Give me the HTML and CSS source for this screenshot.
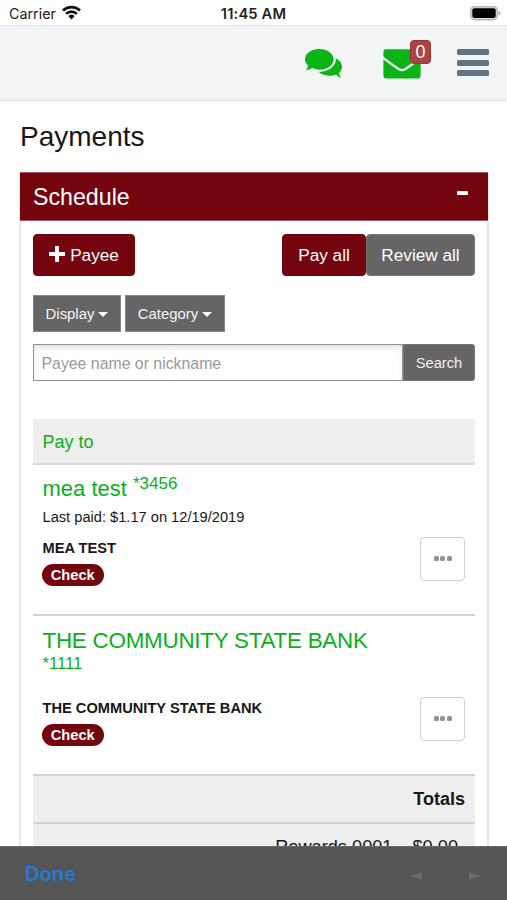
FILE: index.html
```html
<!DOCTYPE html>
<html lang="en">
<head>
<meta charset="utf-8">
<title>Payments</title>
<link rel="stylesheet" href="styles.css">
</head>
<body>
<div class="status">
  <div class="carrier"><span>Carrier</span>
    <svg class="wifi" viewBox="0 0 18 14" width="19" height="15"><g fill="none" stroke="#111" stroke-width="2.6"><path d="M.9 5.1a11.6 11.6 0 0 1 16.2 0"/><path d="M3.9 8.3a7.3 7.3 0 0 1 10.2 0"/></g><path fill="#111" d="M5.9 10.4a4.5 4.5 0 0 1 6.2 0L9 13.6z"/></svg>
  </div>
  <div class="time">11:45 AM</div>
  <svg class="battery" viewBox="0 0 31 15" width="31" height="15"><rect x=".7" y=".7" width="26.6" height="13" rx="3.8" fill="#ddd" stroke="#b8b8b8" stroke-width="1.4"/><rect x="2.3" y="2.3" width="23.4" height="9.8" rx="2" fill="#000"/><path d="M28.5 4.8q2 .6 2 2.4t-2 2.4z" fill="#aaa"/></svg>
</div>
<header class="topbar">
  <svg class="chat" viewBox="0 32 576 448" width="37" height="29"><path fill="#09b414" d="M445 192c0-88.400-99.700-160-222.500-160S0 103.600 0 192c0 34.300 18 68 50 96-4 24-16 43-26 56-5 6-2 14 5 13 34-4 64-18 84-34 33 18 68 29 109.500 29C345.300 352 445 280.400 445 192z"/><path fill="#09b414" d="M530 404c30-28 46-61 46-96 0-56-34-104-94-130 4 110-96 192-230 206-12 1-26 2-40 2 40 38 98 60 160 60 42 0 80-7 112-20 20 18 36 38 62 48 8 3 13-6 9-12-12-16-23-32-25-58z"/></svg>
  <div class="mail">
    <svg viewBox="0 0 38 30" width="38" height="30"><rect x=".4" y=".3" width="37.200" height="29.200" rx="3" fill="#09b414"/><path d="M-1 8C5 12.500 10 16.300 16 20.300Q19 22 22 20.300C28 16.300 33 12.500 39 8" fill="none" stroke="#f2f4f6" stroke-width="2.300"/></svg>
    <span class="count">0</span>
  </div>
  <div class="menu"><i></i><i></i><i></i></div>
</header>
<main>
  <h1>Payments</h1>
  <section class="panel">
    <div class="panel-head"><h2>Schedule</h2><span class="minus"></span></div>
    <div class="panel-body">
      <div class="actions">
        <button class="btn red payee"><svg viewBox="0 0 16 16" width="16" height="16"><path d="M6 0h4v6h6v4h-6v6H6v-6H0V6h6z" fill="#fff"/></svg><span>Payee</span></button>
        <div class="group"><button class="btn red payall">Pay all</button><button class="btn gray review">Review all</button></div>
      </div>
      <div class="filters">
        <button class="filter display">Display<i class="caret"></i></button><button class="filter category">Category<i class="caret"></i></button>
      </div>
      <div class="search"><input type="text" placeholder="Payee name or nickname"><button>Search</button></div>
      <div class="table">
        <div class="thead">Pay to</div>
        <div class="row first">
          <div class="name">mea test <sup>*3456</sup></div>
          <div class="last">Last paid: $1.17 on 12/19/2019</div>
          <div class="detail"><div><div class="full">MEA TEST</div><span class="pill">Check</span></div><button class="more"><i></i><i></i><i></i></button></div>
        </div>
        <div class="row second">
          <div class="name bank">THE COMMUNITY STATE BANK</div>
          <div class="acct">*1111</div>
          <div class="detail"><div><div class="full">THE COMMUNITY STATE BANK</div><span class="pill">Check</span></div><button class="more"><i></i><i></i><i></i></button></div>
        </div>
        <div class="totals">Totals</div>
        <div class="sum"><span>Rewards 0001</span><span>$0.00</span></div>
      </div>
    </div>
  </section>
</main>
<footer class="toolbar">
  <span class="done">Done</span>
  <div class="arrows"><svg viewBox="0 0 12 8" width="12" height="8"><path d="M0 4 12 .5v7z" fill="#6c6c6c"/></svg><svg viewBox="0 0 12 8" width="12" height="8"><path d="M12 4 0 .5v7z" fill="#6c6c6c"/></svg></div>
</footer>
</body>
</html>
```
FILE: styles.css
```css
* { box-sizing: border-box; }
html, body { height: 900px; overflow: hidden; }
body { margin: 0; background: #fff; color: #171717; font-family: "Liberation Sans", Arial, sans-serif; display: flex; flex-direction: column; }
button { font-family: inherit; margin: 0; padding: 0; border: 0; }
h1, h2 { margin: 0; font-weight: 400; }
svg { display: block; }

.status { flex: none; height: 25px; display: grid; grid-template-columns: 1fr auto 1fr; align-items: center; padding: 2px 9px 0 9px; font-family: Inter, sans-serif; color: #222; }
.carrier { display: flex; align-items: center; gap: 6px; font-size: 14.3px; }
.wifi { margin-top: -2px; }
.time { font-weight: 600; font-size: 14.7px; letter-spacing: .15px; }
.battery { justify-self: end; margin-right: -3px; }

.topbar { flex: none; height: 76px; background: #f2f4f6; border-top: 1px solid #e4e4e5; border-bottom: 1px solid #dfe1e4; display: flex; align-items: flex-start; padding: 23px 18.500px 0 305px; }
.mail { position: relative; margin-left: 41px; }
.count { position: absolute; left: 27px; top: -9px; width: 21px; height: 24px; border-radius: 4px; border: 1px solid #993537; background: #ad4143; color: #fff; font-size: 18px; line-height: 23px; text-align: center; }
.menu { margin: 0 0 0 auto; width: 32px; display: flex; flex-direction: column; gap: 4.500px; }
.menu i { height: 6px; border-radius: 1.500px; background: #617283; }

main { flex: none; height: 745px; overflow: hidden; padding: 18px 18px 0 19px; }
h1 { font-size: 28px; line-height: 36px; padding-left: 1px; }
.panel { margin-top: 17px; border: solid #e7e7e7; border-width: 0 2px; height: 700px; }
.panel-head { height: 49px; margin: 0 -1px; padding: 0 20px 0 13px; background: #74050f; border: 1px solid #a15860; border-width: 1px 0; color: #fff; display: flex; justify-content: space-between; }
h2 { font-size: 23.200px; line-height: 48px; }
.minus { width: 11px; height: 4px; margin-top: 18px; background: #fff; border-radius: 1px; }
.panel-body { padding: 13px 12px 0; }
.actions { display: flex; justify-content: space-between; }
.btn { height: 42px; border-radius: 4px; color: #fff; font-size: 17.200px; border: 1px solid; line-height: 40px; }
.red { background: #74050f; border-color: #6b020c; }
.gray { background: #656565; border-color: #777; }
.payee { width: 102px; display: flex; align-items: center; justify-content: center; gap: 5px; }
.payee svg { margin-top: -3px; }
.group { display: flex; }
.payall { width: 84px; }
.review { width: 109px; }
.filters { display: flex; gap: 4px; margin-top: 19px; }
.filter { height: 37px; border: 1px solid #888; background: #656565; color: #f4f4f4; font-size: 14.900px; display: flex; align-items: center; justify-content: center; gap: 4px; }
.display { width: 88px; }
.category { width: 100px; }
.caret { border: 5px solid transparent; border-top-color: #fff; border-bottom: 0; margin-top: 2px; }
.search { display: flex; height: 37px; margin-top: 12px; }
.search input { width: 370px; height: 37px; margin: 0; border: 1px solid #929292; border-radius: 0; padding: 3px 8px 0 7.500px; font: 15.850px "Liberation Sans", Arial, sans-serif; box-shadow: inset 0 4px 7px -2px #ddd; outline: 0; }
.search input::placeholder { color: #999; opacity: 1; }
.search button { width: 72px; height: 37px; background: #656565; border: 1px solid #777; border-radius: 0 3px 3px 0; color: #eee; font-size: 14.700px; }
.table { margin-top: 38px; }
.thead { height: 46px; background: #eee; border-bottom: 2px solid #d9d9d9; padding-left: 9.500px; color: #09b01b; font-size: 18px; line-height: 46px; }
.row { padding: 0 10px 0 9.500px; border-bottom: 2px solid #d2d2d2; }
.first { height: 151px; padding-top: 8px; }
.second { height: 160px; padding-top: 11px; }
.name { color: #09b01b; font-size: 22px; line-height: 31px; height: 34px; }
.name sup { font-size: 17px; line-height: 0; vertical-align: 7px; }
.bank { line-height: 27px; height: 27px; white-space: nowrap; font-size: 22.400px; letter-spacing: -.24px; }
.acct { color: #09b01b; font-size: 16.700px; line-height: 20px; }
.last { font-size: 14.650px; line-height: 20px; }
.detail { display: flex; justify-content: space-between; }
.first .detail { margin-top: 10px; }
.second .detail { margin-top: 23px; }
.full { font-weight: 700; font-size: 14.650px; line-height: 22px; }
.pill { display: block; width: 61.500px; height: 22px; margin: 5px 0 0 -.5px; border-radius: 11px; background: #74050f; color: #fff; text-align: center; font-weight: 700; font-size: 14.700px; line-height: 22px; }
.more { width: 45px; height: 44px; border: 1px solid #d0d0d0; border-radius: 4px; background: #fff; display: flex; align-items: center; justify-content: center; gap: 1.500px; padding-bottom: 2px; }
.more i { width: 5px; height: 5px; border-radius: 1.500px; background: #929292; }
.totals { height: 48px; background: #eee; border-bottom: 2px solid #d2d2d2; padding-right: 10px; text-align: right; font-size: 18px; line-height: 47px; font-weight: 700; }
.sum { height: 48px; background: #eee; display: flex; justify-content: flex-end; gap: 20px; padding-right: 17px; font-size: 18.200px; line-height: 46px; }

.toolbar { flex: none; height: 54px; background: #555; border-top: 1px solid #6c6c6c; display: flex; align-items: center; justify-content: space-between; padding: 0 26px 0 25px; }
.done { font-family: Inter, sans-serif; font-weight: 600; color: #217bd7; font-size: 20.200px; }
.arrows { display: flex; gap: 47px; margin-top: 4px; }
```
